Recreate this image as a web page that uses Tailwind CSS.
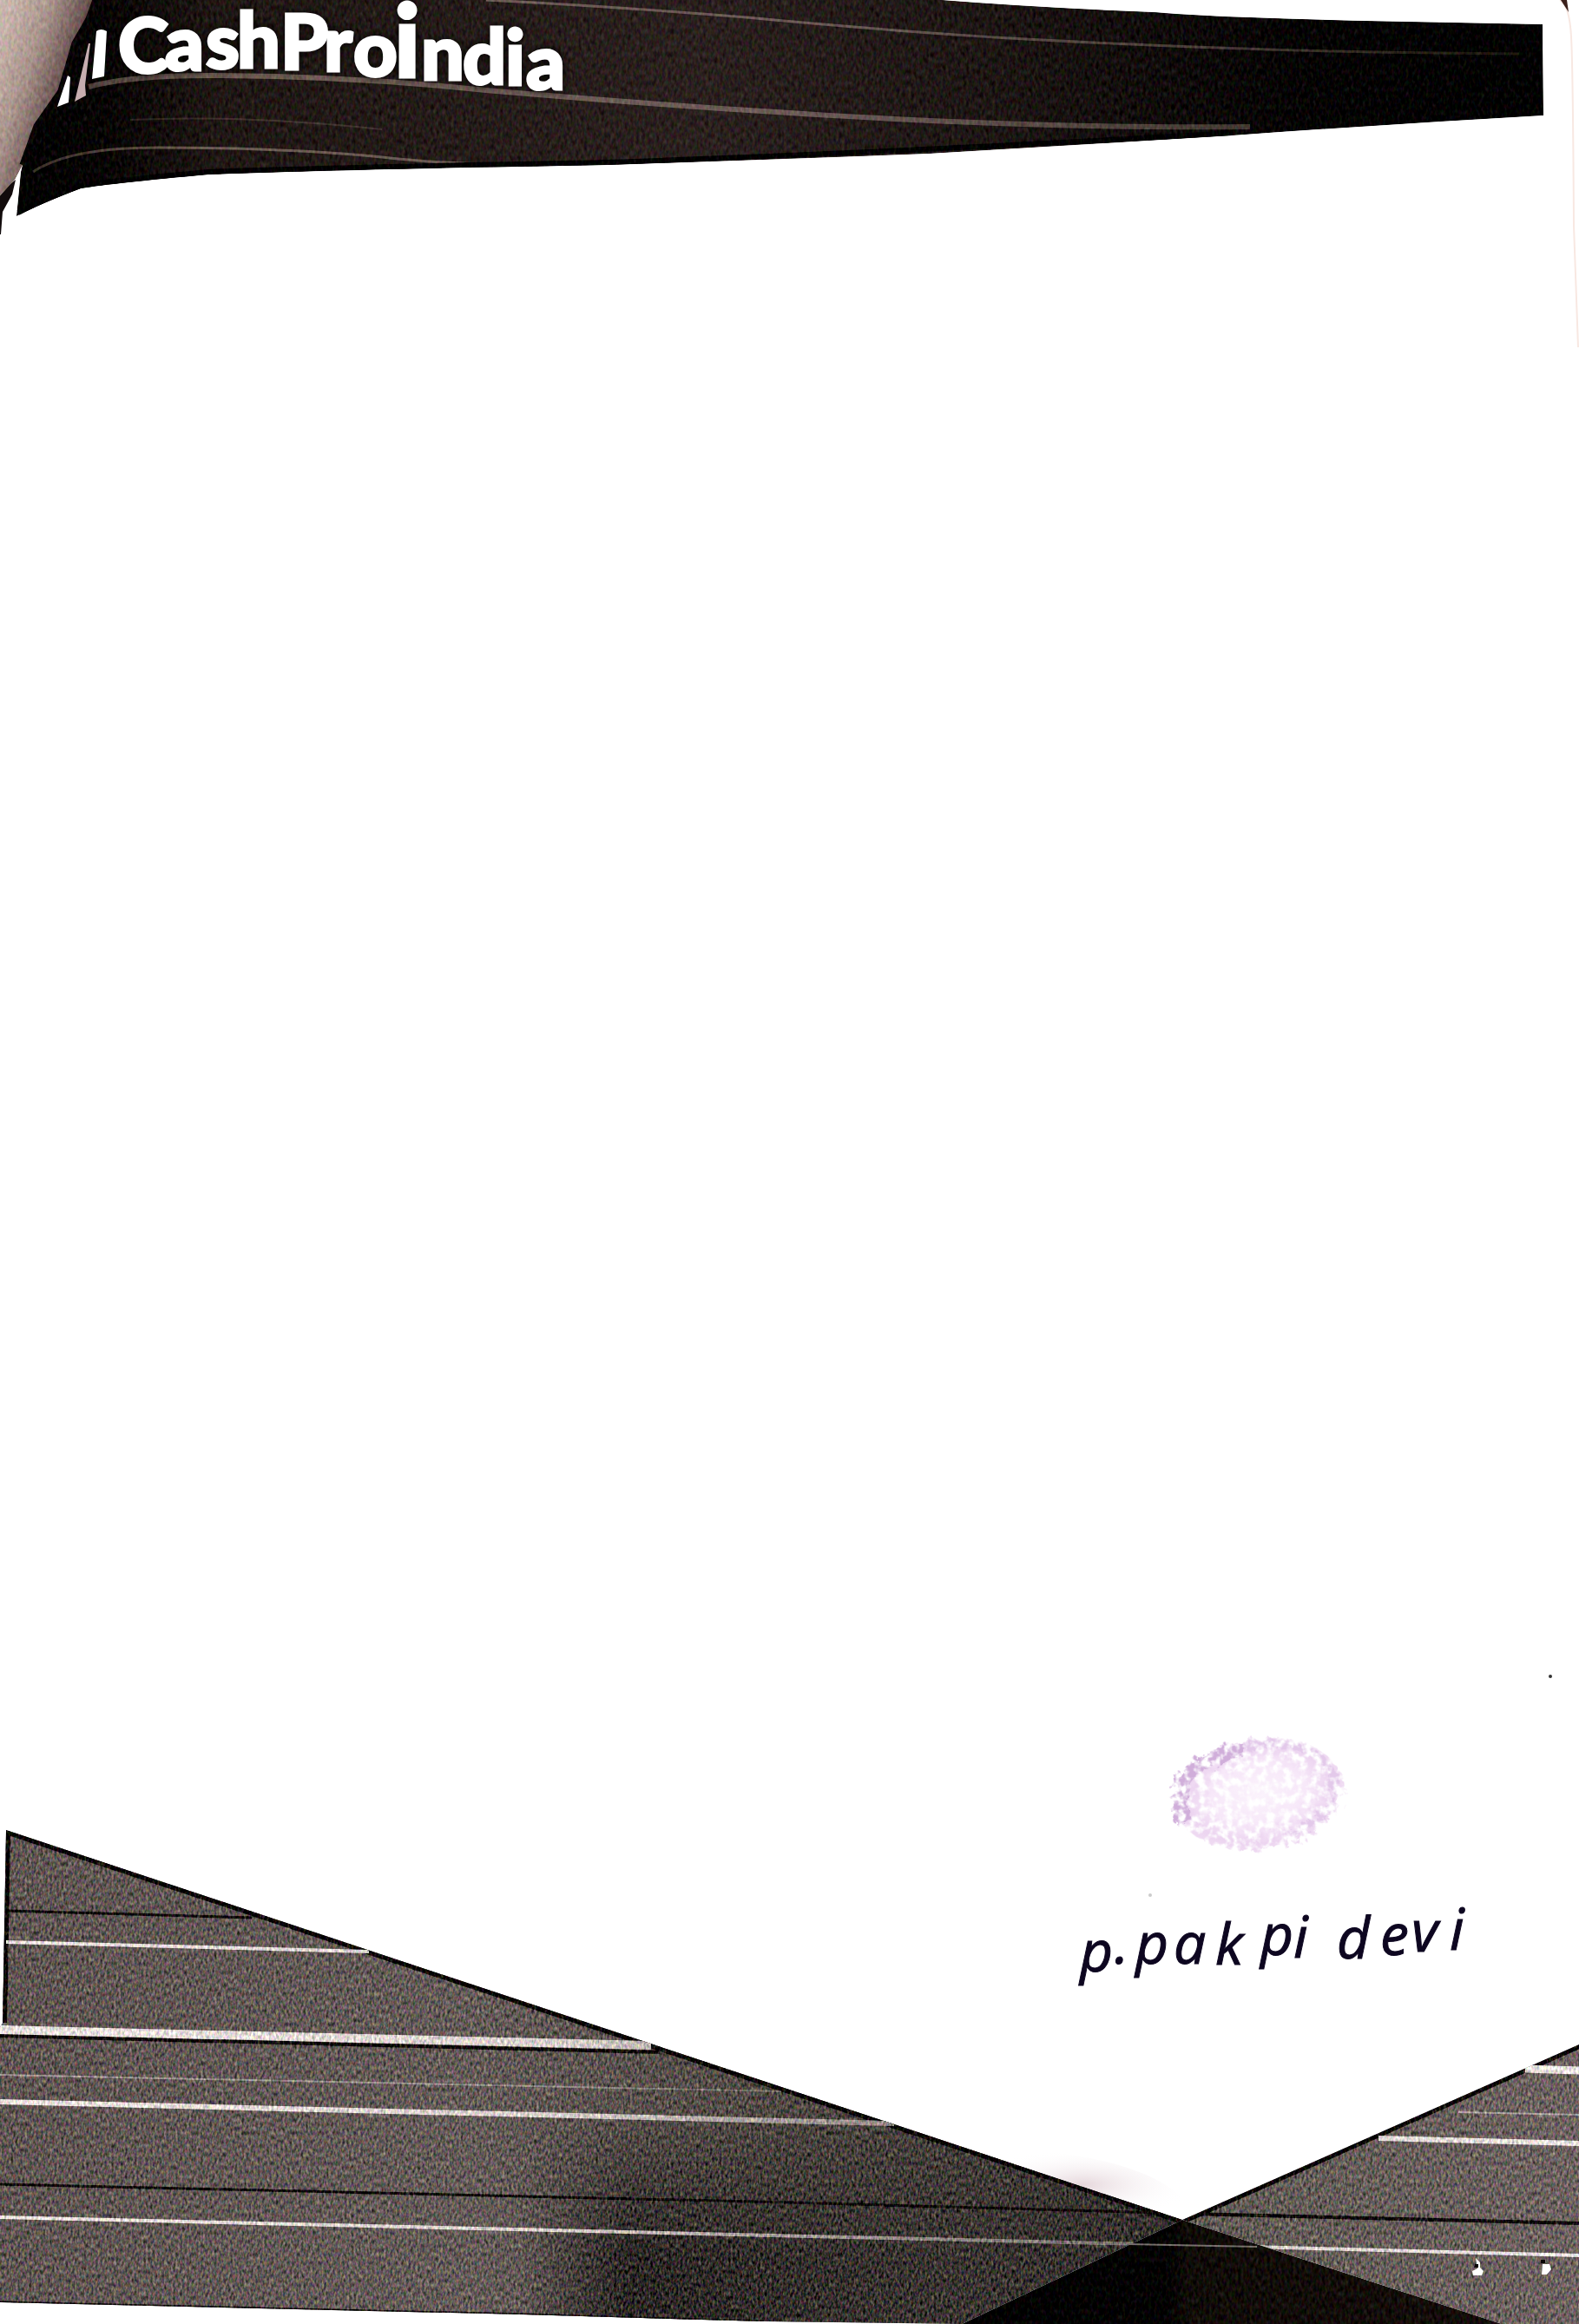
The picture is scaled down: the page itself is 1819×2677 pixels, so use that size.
<!DOCTYPE html>
<html lang="en">
<head>
<meta charset="utf-8">
<meta name="viewport" content="width=device-width, initial-scale=1">
<title>CashProIndia</title>
<script src="https://cdn.jsdelivr.net/npm/@tailwindcss/browser@4"></script>
</head>
<body class="bg-white">
<div class="flex min-h-screen flex-col justify-between overflow-hidden bg-white">
  <header>
    <h1>
    <svg class="block w-full" viewBox="0 0 1819 400">
      <defs>
        <linearGradient id="band" x1="0" x2="1">
          <stop offset="0" stop-color="#000000"/><stop offset=".06" stop-color="#080504"/><stop offset=".13" stop-color="#1f1714"/>
          <stop offset=".45" stop-color="#2a201e"/><stop offset=".65" stop-color="#1c1513"/><stop offset=".84" stop-color="#050303"/><stop offset="1" stop-color="#000000"/>
        </linearGradient>
        <linearGradient id="wear" gradientUnits="userSpaceOnUse" x1="40" x2="1770" y1="0" y2="0">
          <stop offset="0" stop-color="#3c2f2a"/><stop offset=".12" stop-color="#6b5b52"/><stop offset=".5" stop-color="#6b5a57"/>
          <stop offset=".8" stop-color="#443a33"/><stop offset="1" stop-color="#161207"/>
        </linearGradient>
        <linearGradient id="thumb" gradientUnits="userSpaceOnUse" x1="0" y1="40" x2="92" y2="72">
          <stop offset="0" stop-color="#c9b5ac"/><stop offset=".45" stop-color="#a8938b"/><stop offset=".85" stop-color="#6c5553"/><stop offset="1" stop-color="#2a1b1b"/>
        </linearGradient>
        <filter id="grain" x="0" y="0" width="1" height="1" color-interpolation-filters="sRGB">
          <feTurbulence type="fractalNoise" baseFrequency=".3 .15" numOctaves="2" seed="4"/>
          <feColorMatrix values=".8 .1 .1 0 0 .2 .7 .1 0 0 .2 .1 .7 0 0 0 0 0 0 1" result="n"/>
          <feComposite in="SourceGraphic" in2="n" operator="arithmetic" k2="1" k3=".32" k4="-.16"/>
          <feComposite in2="SourceAlpha" operator="in"/>
        </filter>
      </defs>
      <path d="M0 228L17 205 25 190 19 249Q0 240 0 260Z" fill="#fff"/>
      <path d="M0 222L18 207 14 224 3 244 1 270H0Z" fill="#120b0c"/>
      <g filter="url(#grain)">
        <path d="M100 0L85 50 60 112 36 150 24 198 19 249Q48 234 93 217 130 211 240 201 370 196 520 193 610 192 700 190 880 184 1070 177 1260 166 1420 156 1600 143 1778 133L1777 28 1675 26Q1550 24 1440 20 1380 18 1330 14 1200 9 1085 0Z" fill="url(#band)"/>
        <g fill="none" stroke="url(#wear)">
          <path d="M102 100Q150 87 240 87 400 87 560 104C760 121 1120 150 1440 146" stroke-width="6"/>
          <path d="M38 198Q80 170 180 170 330 170 440 181 500 188 590 190" stroke-width="3"/>
          <path d="M560 0Q700 7 860 20 1050 38 1200 46 1480 61 1750 62" stroke-width="3"/>
          <path d="M150 138Q280 132 440 149" stroke-width="2" opacity=".4"/>
        </g>
        <path d="M21 245Q48 231 93 214 130 208 240 198 370 193 700 187 1070 174 1420 153" fill="none" stroke="#000" stroke-width="6"/>
        <path d="M0 0H110L102 22 86 50 70 105 42 145 26 190 17 207 0 226Z" fill="url(#thumb)"/>
        <path d="M110 0L102 22 86 50 70 105 42 145 26 190" fill="none" stroke="#080304" stroke-width="7"/>
      </g>
      <path d="M111 36Q116 32 123 36L120 88 106 91Z" fill="#fff"/>
      <path d="M102 50L104 50 98 98 99 110 86 117Z" fill="#c7aeb0"/>
      <path d="M78 87L81 89 79 118 66 123Z" fill="#fff"/>
      <g class="font-['Lato',sans-serif] font-black [filter:drop-shadow(0_0_5px_#000)]" fill="#fff" stroke="#fff" stroke-width="3">
        <text font-size="88"><tspan x="136 190 237 273 323 373 407" y="84 81 79 78 80 82 88">CashPro</tspan><tspan x="454" y="89" font-size="116">i</tspan><tspan x="485 533 582 606" y="92 97 98 103">ndia</tspan></text>
      </g>
      <path d="M1797 0Q1808 6 1810 42T1813 260L1818 400" fill="none" stroke="#f8e8e2" stroke-width="2"/>
      <path d="M1798 0H1805L1807 14Z" fill="#3b211c"/>
    </svg>
    </h1>
  </header>

  <footer>
    <svg class="block w-full" viewBox="0 1900 1819 777">
      <defs>
        <linearGradient id="ink" gradientUnits="userSpaceOnUse" x1="0" x2="1360" y1="0" y2="0">
          <stop offset="0" stop-color="#5f5552"/><stop offset=".4" stop-color="#645b58"/><stop offset=".65" stop-color="#504944"/><stop offset="1" stop-color="#3c3734"/>
        </linearGradient>
        <linearGradient id="shadeX" gradientUnits="userSpaceOnUse" x1="600" x2="1100" y1="0" y2="0">
          <stop offset="0" stop-color="#1a1716" stop-opacity="0"/><stop offset=".25" stop-color="#1a1716" stop-opacity=".75"/><stop offset="1" stop-color="#1a1716" stop-opacity=".3"/>
        </linearGradient>
        <linearGradient id="fadeY" gradientUnits="userSpaceOnUse" x1="0" x2="0" y1="2430" y2="2600">
          <stop offset="0" stop-color="#000"/><stop offset="1" stop-color="#fff"/>
        </linearGradient>
        <mask id="lower" maskUnits="userSpaceOnUse" x="0" y="2100" width="1819" height="577"><path d="M0 2100H1819V2677H0Z" fill="url(#fadeY)"/></mask>
        <linearGradient id="right" x1="0" x2="1"><stop offset="0" stop-color="#5f5953"/><stop offset="1" stop-color="#6d6260"/></linearGradient>
        <linearGradient id="diamond" x1="0" x2="1"><stop offset="0" stop-color="#000"/><stop offset=".38" stop-color="#020101"/><stop offset=".42" stop-color="#100c08"/><stop offset="1" stop-color="#140d0a"/></linearGradient>
        <linearGradient id="streak" gradientUnits="userSpaceOnUse" x1="0" x2="1819" y1="0" y2="0">
          <stop offset="0" stop-color="#eee4e1"/><stop offset=".35" stop-color="#d9d0cc"/><stop offset=".5" stop-color="#a09793"/><stop offset=".72" stop-color="#77706c"/><stop offset=".8" stop-color="#d8d0cc"/><stop offset="1" stop-color="#eee5e3"/>
        </linearGradient>
        <radialGradient id="smudge"><stop offset="0" stop-color="#e6d7dc"/><stop offset="1" stop-color="#fff" stop-opacity="0"/></radialGradient>
        <radialGradient id="stamp"><stop offset="0" stop-color="#fbf3fc"/><stop offset=".55" stop-color="#f7e8f9"/><stop offset=".85" stop-color="#ecd4f0"/><stop offset="1" stop-color="#efdaf2"/></radialGradient>
        <filter id="coarse" x="0" y="0" width="1" height="1" color-interpolation-filters="sRGB">
          <feTurbulence type="fractalNoise" baseFrequency=".38 .2" numOctaves="2" seed="9"/>
          <feColorMatrix values=".8 .1 .1 0 0 .4 .5 .1 0 0 .4 .1 .5 0 0 0 0 0 0 1" result="n"/>
          <feComposite in="SourceGraphic" in2="n" operator="arithmetic" k2="1" k3=".9" k4="-.45"/>
          <feComposite in2="SourceAlpha" operator="in"/>
        </filter>
        <filter id="blot" x="-.1" y="-.1" width="1.2" height="1.2" color-interpolation-filters="sRGB">
          <feTurbulence type="fractalNoise" baseFrequency=".11" numOctaves="3" seed="3" result="t"/>
          <feDisplacementMap in="SourceGraphic" in2="t" scale="18" result="d"/>
          <feColorMatrix in="t" values="0 0 0 0 1 0 0 0 0 1 0 0 0 0 1 4 0 0 0 -1.7" result="w"/>
          <feComposite in="w" in2="d" operator="atop"/>
        </filter>
      </defs>

      <g transform="rotate(-8 1448 2065)" filter="url(#blot)">
        <ellipse cx="1450" cy="2067" rx="98" ry="64" fill="url(#stamp)"/>
        <path d="M1360 2088C1350 2040 1374 2016 1440 2014" fill="none" stroke="#d0aeda" stroke-width="16"/>
        <path d="M1440 2010C1510 2007 1550 2040 1535 2085Q1520 2110 1480 2116" fill="none" stroke="#e3c9ea" stroke-width="9"/>
      </g>

      <text class="font-['Open_Sans',sans-serif] italic" font-size="66" fill="#0d0620" stroke="#0d0620" stroke-width="1"
        x="1244 1284 1308 1352 1400 1452 1490 1540 1590 1626 1670" y="2271 2262 2262 2262 2263 2252 2255 2256 2252 2248 2246">p.pakpidevi</text>
      <circle cx="1786" cy="1931" r="2" fill="#333"/>
      <circle cx="1325" cy="2183" r="2" fill="#ccc"/>

      <path d="M1120 2477C1200 2470 1350 2490 1375 2551L1362 2557Z" fill="url(#smudge)"/>

      <g filter="url(#coarse)">
        <clipPath id="left"><path d="M7 2108L1362 2557 1108 2677 880 2674 600 2666 0 2652V2335L3 2330Z"/></clipPath>
        <g clip-path="url(#left)">
          <path d="M0 2100H1370V2677H0Z" fill="url(#ink)"/>
          <path d="M600 2300H1370V2677H600Z" fill="url(#shadeX)" mask="url(#lower)"/>
          <path d="M3 2330L7 2108 1362 2557" fill="none" stroke="#060303" stroke-width="10"/>
          <g fill="none" stroke="#0d0908" stroke-width="3">
            <path d="M10 2201L290 2209"/><path d="M0 2516L910 2537 1340 2549"/><path d="M0 2345L760 2364" stroke-width="4"/>
            <path d="M0 2652L600 2666 880 2674"/>
          </g>
          <g fill="none" stroke="url(#streak)">
            <path d="M7 2237L425 2248" stroke-width="4"/>
            <path d="M0 2338L750 2356" stroke-width="10"/>
            <path d="M0 2390L900 2409" stroke-width="2" opacity=".45"/>
            <path d="M0 2421L1030 2446" stroke-width="6"/>
            <path d="M0 2554L1362 2586" stroke-width="4"/>
          </g>
        </g>
        <clipPath id="rightArea"><path d="M1362 2557L1819 2355V2677H1730Z"/></clipPath>
        <g clip-path="url(#rightArea)">
          <path d="M1362 2350H1819V2677H1362Z" fill="url(#right)"/>
          <path d="M1362 2557L1819 2355" stroke="#060303" stroke-width="10"/>
          <path d="M1370 2550L1819 2561" stroke="#0d0908" stroke-width="4"/>
          <g fill="none" stroke="url(#streak)">
            <path d="M1757 2383L1819 2385" stroke-width="9"/>
            <path d="M1680 2433L1819 2436" stroke-width="2" opacity=".5"/>
            <path d="M1588 2463L1819 2469" stroke-width="6"/>
            <path d="M1440 2588L1819 2598" stroke-width="4"/>
          </g>
        </g>
      </g>
      <g filter="url(#grain)">
        <path d="M1362 2557L1108 2677H1730Z" fill="url(#diamond)"/>
        <path d="M1300 2585L1448 2588" stroke="#77706c" stroke-width="2"/>
      </g>
      <path d="M1700 2601L1705 2606V2612L1709 2616 1707 2621H1697L1696 2616 1702 2613Z" fill="#fff"/>
      <path d="M1699 2608H1703V2612H1698Z" fill="#080404"/>
      <path d="M1777 2608H1785L1787 2614 1782 2620H1776Z" fill="#fff"/>
      <path d="M1775 2603H1780V2607H1775Z" fill="#080404"/>
    </svg>
  </footer>
</div>
</body>
</html>
